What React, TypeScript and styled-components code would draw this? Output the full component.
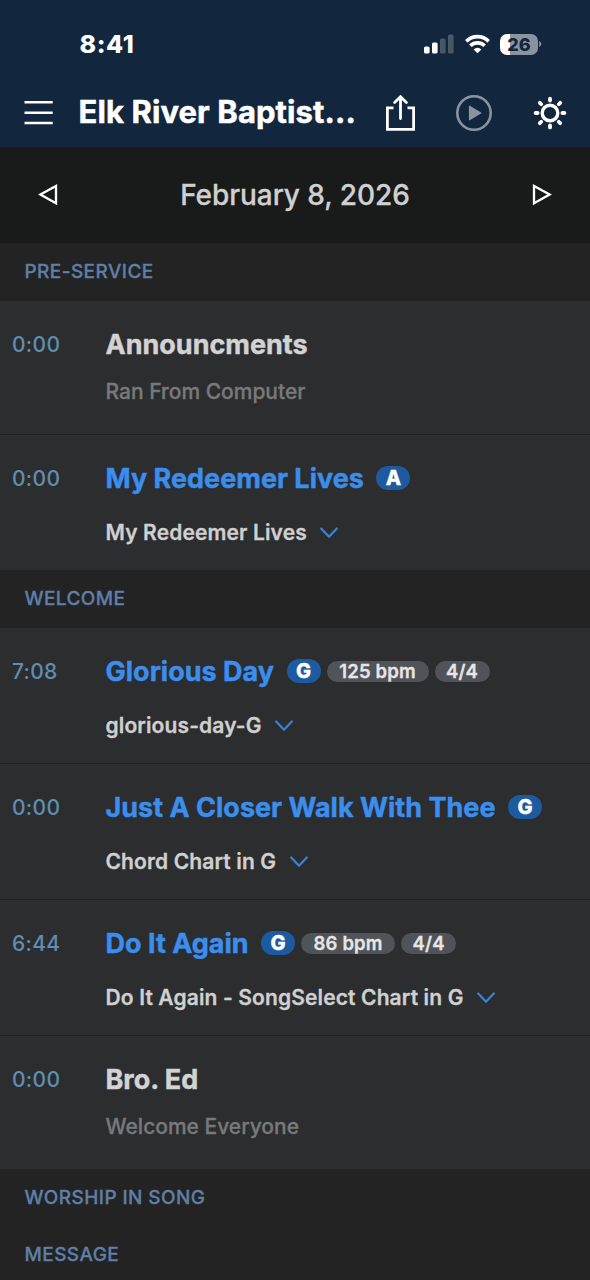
import React from 'react';
import styled, { createGlobalStyle } from 'styled-components';

const GlobalStyle = createGlobalStyle`
  * { box-sizing: border-box; }
  html, body { margin: 0; padding: 0; background: #232323; }
  body { width: 590px; height: 1280px; overflow: hidden; font-family: Inter, 'Liberation Sans', sans-serif; }
  button { background: none; border: 0; padding: 0; font: inherit; color: inherit; display: flex; }
  svg { display: block; flex: none; }
`;

const Screen = styled.main`
  width: 590px;
  height: 1280px;
  overflow: hidden;
  display: flex;
  flex-direction: column;
  background: #232323;
`;

const Header = styled.header`
  height: 147px;
  flex: none;
  background: #12263d;
  color: #fff;
`;

const StatusBar = styled.div`
  height: 78px;
  padding: 10px 48px 0 79.5px;
  display: flex;
  align-items: center;
  justify-content: space-between;
`;

const Clock = styled.span`
  font-size: 25px;
  line-height: 30px;
  font-weight: 800;
  letter-spacing: 0.6px;
`;

const StatusIcons = styled.div`
  display: flex;
  align-items: center;
`;

const WifiIcon = styled.svg`
  margin-left: 11px;
`;

const Battery = styled.div`
  width: 38px;
  height: 21px;
  margin-left: 10px;
  border-radius: 7px;
  background: linear-gradient(90deg, #fff 10px, #8a94a0 10px);
  color: #12263d;
  font-size: 18px;
  line-height: 21px;
  font-weight: 800;
  text-align: center;
`;

const NavBar = styled.nav`
  height: 69px;
  padding: 0 23px 0 24px;
  display: flex;
  align-items: center;
`;

const AppTitle = styled.h1`
  width: 307px;
  margin: 0;
  padding: 0 0 2px 25.5px;
  font-size: 31px;
  line-height: 36px;
  font-weight: 700;
  letter-spacing: 0.1px;
  -webkit-text-stroke: 0.5px currentColor;
  white-space: nowrap;
`;

const Actions = styled.div`
  flex: 1;
  display: flex;
  align-items: center;
  justify-content: space-between;
  padding-left: 25px;
`;

const PlayButton = styled.button`
  && { margin-right: 2px; }
`;

const DateBar = styled.div`
  height: 96px;
  flex: none;
  padding: 0 38px;
  display: flex;
  align-items: center;
  justify-content: space-between;
  background: #191b1a;
  color: #fff;
`;

const DateText = styled.span`
  color: #d0d0d0;
  font-size: 28px;
  line-height: 36px;
  font-weight: 500;
  letter-spacing: -0.05px;
  -webkit-text-stroke: 0.3px currentColor;
`;

const SectionHeader = styled.h2<{ $height?: number }>`
  margin: 0;
  height: ${(p) => p.$height ?? 57}px;
  flex: none;
  padding: 0 24.5px;
  line-height: 58px;
  color: #5f7fa8;
  font-size: 19px;
  font-weight: 500;
  letter-spacing: 0.42px;
  -webkit-text-stroke: 0.3px currentColor;
`;

const Row = styled.article<{ $height: number; $last?: boolean }>`
  height: ${(p) => p.$height}px;
  flex: none;
  display: grid;
  grid-template-columns: 93.5px 1fr;
  padding: 26px 0 0 12px;
  background: #2c2d2f;
  border-bottom: ${(p) => (p.$last ? 0 : 1)}px solid #202122;
`;

const Time = styled.span`
  color: #5f8db3;
  font-size: 21px;
  line-height: 36px;
  font-weight: 500;
  letter-spacing: 0.3px;
`;

const TitleLine = styled.div`
  display: flex;
  align-items: center;
  height: 36px;
`;

const Title = styled.h3<{ $song?: boolean }>`
  margin: 0 12.5px 0 0;
  color: ${(p) => (p.$song ? '#3b8eed' : '#d3d3d3')};
  font-size: 27px;
  line-height: 36px;
  font-weight: 700;
  -webkit-text-stroke: 0.45px currentColor;
  white-space: nowrap;
`;

const KeyBadge = styled.span`
  width: 34px;
  height: 24px;
  margin-bottom: 2px;
  border-radius: 12px;
  background: #1d5a9f;
  color: #fff;
  font-size: 20px;
  line-height: 24px;
  font-weight: 800;
  -webkit-text-stroke: 0.3px currentColor;
  text-align: center;
`;

const MetaBadge = styled.span<{ $width: number }>`
  width: ${(p) => p.$width}px;
  height: 21px;
  margin: 0 0 1px 6px;
  border-radius: 11px;
  background: #505358;
  color: #e6e6e6;
  font-size: 18.5px;
  line-height: 21px;
  font-weight: 600;
  letter-spacing: 0.15px;
  -webkit-text-stroke: 0.3px currentColor;
  text-align: center;
  white-space: nowrap;
`;

const Note = styled.p`
  margin: 15px 0 0;
  color: #78797b;
  font-size: 21px;
  line-height: 28px;
  font-weight: 500;
  -webkit-text-stroke: 0.3px currentColor;
`;

const Chart = styled.button`
  && {
    margin-top: 22px;
    align-items: center;
    gap: 13.5px;
    color: #d0d0d0;
    font-size: 21px;
    line-height: 28px;
    font-weight: 600;
    letter-spacing: 0.13px;
    -webkit-text-stroke: 0.3px currentColor;
    white-space: nowrap;
  }
`;

type Item = {
  time: string;
  title: string;
  height: number;
  note?: string;
  chart?: string;
  songKey?: string;
  bpm?: [string, number];
  meter?: string;
};

const preService: Item[] = [
  { time: '0:00', title: 'Announcments', note: 'Ran From Computer', height: 134 },
  { time: '0:00', title: 'My Redeemer Lives', chart: 'My Redeemer Lives', songKey: 'A', height: 135 },
];

const welcome: Item[] = [
  { time: '7:08', title: 'Glorious Day', chart: 'glorious-day-G', songKey: 'G', bpm: ['125 bpm', 102], meter: '4/4', height: 136 },
  { time: '0:00', title: 'Just A Closer Walk With Thee', chart: 'Chord Chart in G', songKey: 'G', height: 136 },
  { time: '6:44', title: 'Do It Again', chart: 'Do It Again - SongSelect Chart in G', songKey: 'G', bpm: ['86 bpm', 94], meter: '4/4', height: 136 },
  { time: '0:00', title: 'Bro. Ed', note: 'Welcome Everyone', height: 133 },
];

const Chevron = () => (
  <svg width="18" height="12" viewBox="0 0 18 12" fill="none" stroke="#3a82d2" strokeWidth="2.2" strokeLinecap="round" strokeLinejoin="round">
    <path d="M1.2 1.5 9 9.8l7.8-8.3" />
  </svg>
);

const ServiceItem = ({ item, last }: { item: Item; last: boolean }) => (
  <Row $height={item.height} $last={last}>
    <Time>{item.time}</Time>
    <div>
      <TitleLine>
        <Title $song={!!item.songKey}>{item.title}</Title>
        {item.songKey && <KeyBadge>{item.songKey}</KeyBadge>}
        {item.bpm && <MetaBadge $width={item.bpm[1]}>{item.bpm[0]}</MetaBadge>}
        {item.meter && <MetaBadge $width={55}>{item.meter}</MetaBadge>}
      </TitleLine>
      {item.note && <Note>{item.note}</Note>}
      {item.chart && <Chart>{item.chart}<Chevron /></Chart>}
    </div>
  </Row>
);

const rays = [0, 45, 90, 135, 180, 225, 270, 315];

export default function App() {
  return (
    <Screen>
      <GlobalStyle />
      <Header>
        <StatusBar>
          <Clock>8:41</Clock>
          <StatusIcons>
            <svg width="30" height="20" viewBox="0 0 30 20" fill="#fff">
              <rect x="0" y="12.5" width="5.6" height="7" rx="1.6" />
              <rect x="8" y="8.5" width="5.6" height="11" rx="1.6" />
              <rect x="16" y="4.5" width="5.6" height="15" rx="1.6" opacity=".23" />
              <rect x="24" y="0.5" width="5.6" height="19" rx="1.6" opacity=".23" />
            </svg>
            <WifiIcon width="25" height="20" viewBox="0 0 26 20" fill="none" stroke="#fff" strokeWidth="3.9">
              <path d="M1.4 7.2a16.4 16.4 0 0 1 23.2 0" />
              <path d="M5.6 11.8a10.5 10.5 0 0 1 14.8 0" />
              <path d="M13 19.5 9 15.6a5.8 5.8 0 0 1 8 0Z" fill="#fff" stroke="none" />
            </WifiIcon>
            <Battery>26</Battery>
            <svg width="4" height="8" viewBox="0 0 4 8"><path d="M1.2 1a3.2 3.2 0 0 1 0 6Z" fill="#8a94a0" /></svg>
          </StatusIcons>
        </StatusBar>
        <NavBar>
          <button aria-label="Menu">
            <svg width="29" height="26" viewBox="0 0 29 26" stroke="#fff" strokeWidth="2.6">
              <path d="M.5 2.3h28.2M.5 12.7h28.2M.5 23h28.2" />
            </svg>
          </button>
          <AppTitle>Elk River Baptist...</AppTitle>
          <Actions>
            <button aria-label="Share">
              <svg width="31" height="38" viewBox="0 0 31 38" fill="none" stroke="#fff" strokeWidth="2.8">
                <path d="M8.5 13.8H2.4v21.6h26.2V13.8h-6.1" />
                <path d="M15.5 24.5V3M9.6 8.6l5.9-5.9 5.9 5.9" strokeLinecap="round" />
              </svg>
            </button>
            <PlayButton aria-label="Play">
              <svg width="36" height="36" viewBox="0 0 36 36" fill="none">
                <circle cx="18" cy="18" r="16.7" stroke="#8994a1" strokeWidth="2.6" />
                <path d="M13.5 11.2v13.6L24.8 18Z" fill="#8994a1" stroke="#8994a1" strokeWidth="1.2" strokeLinejoin="round" />
              </svg>
            </PlayButton>
            <button aria-label="Brightness">
              <svg width="34" height="34" viewBox="0 0 34 34" fill="none" stroke="#fff" strokeLinecap="round">
                <circle cx="17" cy="17" r="7.8" strokeWidth="3.4" />
                {rays.map((a) => (
                  <path key={a} d="M17 2.6v2" strokeWidth="3.8" transform={`rotate(${a} 17 17)`} />
                ))}
              </svg>
            </button>
          </Actions>
        </NavBar>
      </Header>
      <DateBar>
        <button aria-label="Previous">
          <svg width="20" height="22" viewBox="0 0 20 22" fill="none" stroke="#fff" strokeWidth="2.3">
            <path d="M18 2v17.2L2.4 10.6Z" />
          </svg>
        </button>
        <DateText>February 8, 2026</DateText>
        <button aria-label="Next">
          <svg width="20" height="22" viewBox="0 0 20 22" fill="none" stroke="#fff" strokeWidth="2.3">
            <path d="M2 2v17.2l15.6-8.6Z" />
          </svg>
        </button>
      </DateBar>
      <SectionHeader $height={58}>PRE-SERVICE</SectionHeader>
      {preService.map((item, i) => <ServiceItem key={item.title} item={item} last={i === preService.length - 1} />)}
      <SectionHeader $height={58}>WELCOME</SectionHeader>
      {welcome.map((item, i) => <ServiceItem key={item.title} item={item} last={i === welcome.length - 1} />)}
      <SectionHeader>WORSHIP IN SONG</SectionHeader>
      <SectionHeader>MESSAGE</SectionHeader>
    </Screen>
  );
}
